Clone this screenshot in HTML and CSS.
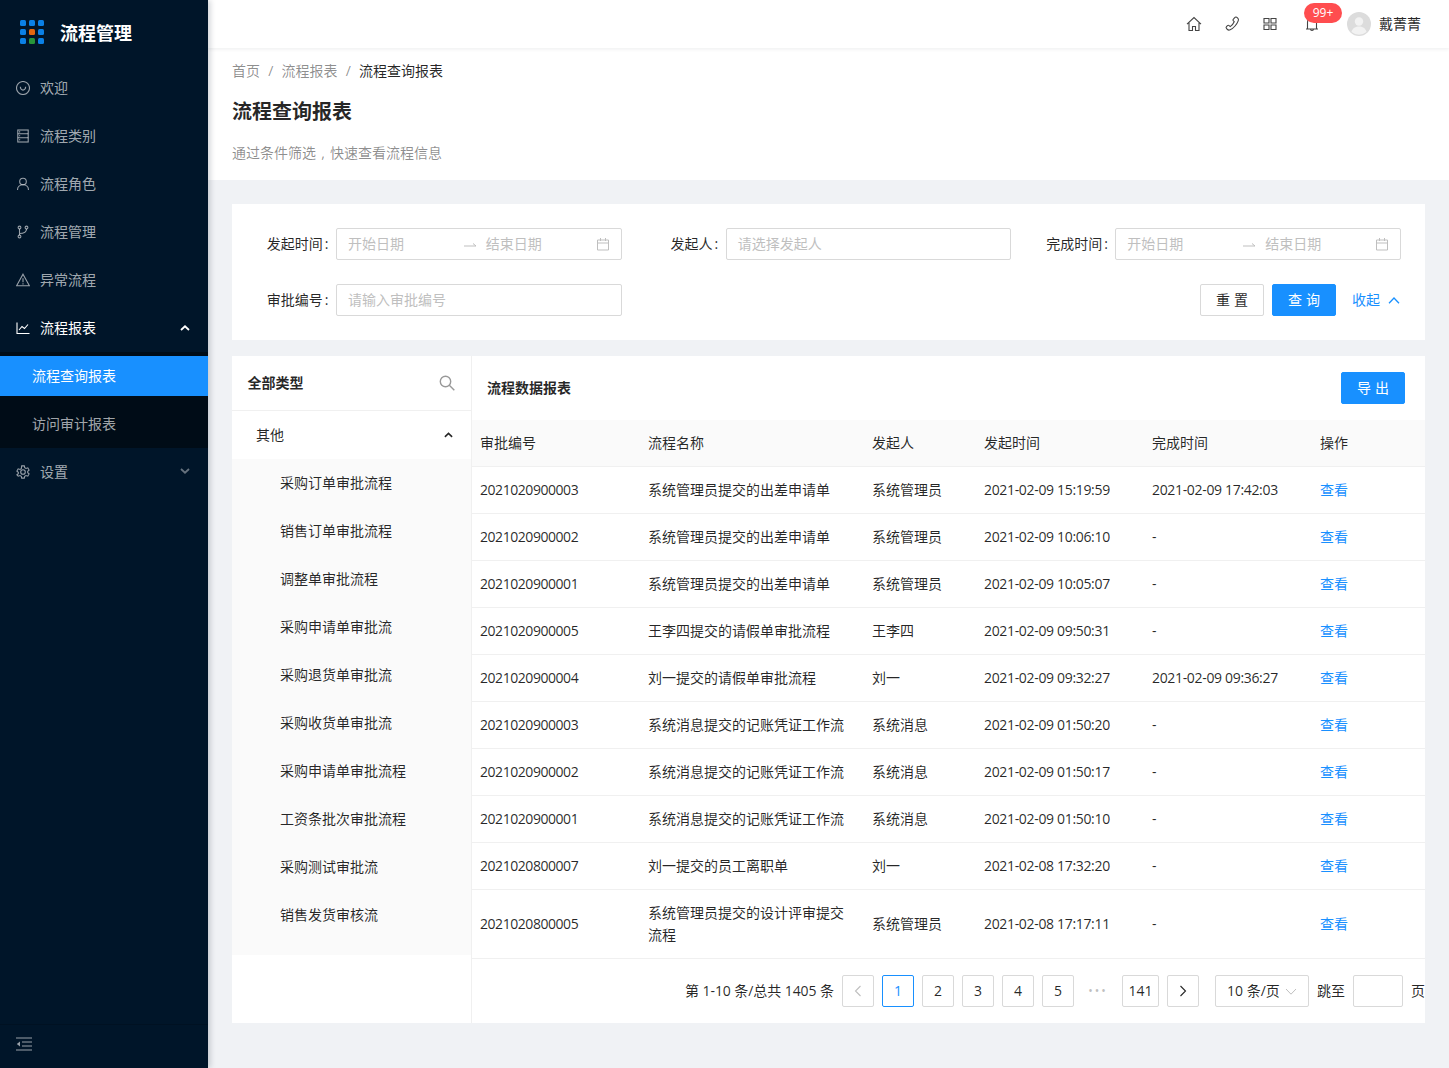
FILE: index.html
```html
<!DOCTYPE html>
<html lang="zh-CN">
<head>
<meta charset="utf-8">
<title>流程查询报表</title>
<link rel="stylesheet" href="styles.css">
</head>
<body>
<div class="app">
  <aside class="sider">
    <div class="logo">
      <div class="logo-dots">
        <i></i><i></i><i></i><i></i><i class="orange"></i><i></i><i></i><i class="green"></i><i></i>
      </div>
      <span class="logo-text">流程管理</span>
    </div>
    <nav class="menu">
      <a class="menu-item"><svg class="ic" viewBox="0 0 14 14"><circle cx="7" cy="7" r="6.500"/><path d="M4.300 5.800c.2 2.200 1.200 3.300 2.700 3.300s2.500-1.100 2.700-3.300"/></svg><span>欢迎</span></a>
      <a class="menu-item"><svg class="ic" viewBox="0 0 14 14"><rect x="1.800" y="1" width="10.400" height="12"/><path d="M1.800 4.800h10.400M1.800 8.800h10.400M3 2.900h1.200M3 6.800h1.200M3 10.800h1.200"/></svg><span>流程类别</span></a>
      <a class="menu-item"><svg class="ic" viewBox="0 0 14 14"><circle cx="7" cy="4.500" r="3.300"/><path d="M1.500 13c0-3.200 2.400-5.200 5.500-5.200s5.500 2 5.500 5.200"/></svg><span>流程角色</span></a>
      <a class="menu-item"><svg class="ic" viewBox="0 0 14 14"><circle cx="3.500" cy="2.500" r="1.400"/><circle cx="3.500" cy="11.500" r="1.400"/><circle cx="10.500" cy="2.500" r="1.400"/><path d="M3.500 4v6M3.500 8.500c4 0 7-1 7-4.600"/></svg><span>流程管理</span></a>
      <a class="menu-item"><svg class="ic" viewBox="0 0 14 14"><path d="M7 1.200 13.400 12.800H.6Z"/><path d="M7 5.200v4M7 10.200v1.200"/></svg><span>异常流程</span></a>
      <a class="menu-item open"><svg class="ic" viewBox="0 0 14 14"><path d="M1 1.500V12.500H13.500M3 9l3-3.500 2.500 2L12 3.500"/></svg><span>流程报表</span><svg class="arrow" viewBox="0 0 10 6"><path d="M1 5 5 1.300 9 5"/></svg></a>
      <div class="submenu">
        <a class="sub-item active">流程查询报表</a>
        <a class="sub-item">访问审计报表</a>
      </div>
      <a class="menu-item"><svg class="ic" viewBox="0 0 14 14"><path d="M5.700.9h2.600l.4 1.800 1.300.7 1.800-.6 1.300 2.300-1.400 1.200v1.400l1.400 1.200-1.300 2.300-1.800-.6-1.300.7-.4 1.800H5.700l-.4-1.800-1.300-.7-1.800.6L.9 9.900l1.400-1.200V7.300L.9 6.100l1.300-2.300 1.800.6 1.300-.7Z"/><circle cx="7" cy="7" r="2.300"/></svg><span>设置</span><svg class="arrow dim" viewBox="0 0 10 6"><path d="M1 1 5 4.700 9 1"/></svg></a>
    </nav>
    <div class="sider-foot">
      <svg class="fold" viewBox="0 0 16 14"><path d="M0 1h16M6 5h10M6 9h10M0 13h16"/><path class="solid" d="M4 4.500v5L.8 7Z"/></svg>
    </div>
  </aside>

  <div class="main">
    <header class="topbar">
      <svg class="top-ic" viewBox="0 0 16 16"><path d="M1 8.200 8 1.500l7 6.700M3 6.800V14.500h3.500v-4h3v4H13V6.800"/></svg>
      <svg class="top-ic" viewBox="0 0 16 16"><path d="M10.500 1.800c1-1 2-.9 2.700-.2l.9.900c.6.700.5 1.300.1 2.400-1 2.900-4.800 7.700-8 8.900-1 .4-2 .4-2.700-.3l-.9-.9c-.7-.7-.6-1.400-.1-1.900l1-1c.5-.5 1.200-.5 1.700 0l1 .9c1.500-1 3.200-3 4-4.900l-.8-.9c-.5-.5-.5-1.200 0-1.700Z"/></svg>
      <svg class="top-ic" viewBox="0 0 16 16"><path d="M2 2.500h5v4.500H2ZM9 2.500h5v4.500H9ZM2 9h5v4.500H2ZM9 9h5v4.500H9Z"/></svg>
      <div class="bell">
        <svg class="top-ic" viewBox="0 0 16 16"><path d="M3.500 13V6.500C3.500 3.800 5.500 2 8 2s4.500 1.800 4.500 4.500V13M2 13h12M6.500 13c0 2 3 2 3 0"/></svg>
        <span class="badge">99+</span>
      </div>
      <div class="user">
        <svg class="avatar" viewBox="0 0 24 24"><circle cx="12" cy="12" r="12" fill="#dcdcdc"/><circle cx="12" cy="9.500" r="4.200" fill="#f2f2f2"/><path d="M4.500 20c1-4 4-5.500 7.500-5.500s6.500 1.500 7.500 5.500a12 12 0 0 1-15 0Z" fill="#f2f2f2"/></svg>
        <span>戴菁菁</span>
      </div>
    </header>

    <section class="page-head">
      <div class="crumbs"><span>首页</span><em>/</em><span>流程报表</span><em>/</em><b>流程查询报表</b></div>
      <h1>流程查询报表</h1>
      <p>通过条件筛选<span class="comma">,</span>快速查看流程信息</p>
    </section>

    <div class="content">
      <form class="filter">
        <div class="field"><label>发起时间<i>:</i></label>
          <div class="input range"><span>开始日期</span><svg class="swap" viewBox="0 0 14 6"><path d="M1 4h12L10 1.500"/></svg><span>结束日期</span><svg class="cal" viewBox="0 0 14 14"><path d="M1.500 3h11v10h-11ZM1.500 6h11M4.500 1v3M9.500 1v3"/></svg></div>
        </div>
        <div class="field"><label>发起人<i>:</i></label>
          <div class="input"><span>请选择发起人</span></div>
        </div>
        <div class="field"><label>完成时间<i>:</i></label>
          <div class="input range"><span>开始日期</span><svg class="swap" viewBox="0 0 14 6"><path d="M1 4h12L10 1.500"/></svg><span>结束日期</span><svg class="cal" viewBox="0 0 14 14"><path d="M1.500 3h11v10h-11ZM1.500 6h11M4.500 1v3M9.500 1v3"/></svg></div>
        </div>
        <div class="field"><label>审批编号<i>:</i></label>
          <div class="input"><span>请输入审批编号</span></div>
        </div>
        <div class="actions">
          <button type="button" class="btn"><span class="sp">重置</span></button>
          <button type="button" class="btn primary"><span class="sp">查询</span></button>
          <a class="collapse">收起<svg viewBox="0 0 12 7"><path d="M1 6.200 6 1l5 5.200"/></svg></a>
        </div>
      </form>

      <section class="panel">
        <aside class="types">
          <div class="types-head"><b>全部类型</b><svg viewBox="0 0 16 16"><circle cx="6.500" cy="6.500" r="5.200"/><path d="m10.300 10.300 5 5"/></svg></div>
          <div class="types-group"><span>其他</span><svg viewBox="0 0 10 6"><path d="M1 5 5 1.300 9 5"/></svg></div>
          <ul class="types-list">
            <li>采购订单审批流程</li>
            <li>销售订单审批流程</li>
            <li>调整单审批流程</li>
            <li>采购申请单审批流</li>
            <li>采购退货单审批流</li>
            <li>采购收货单审批流</li>
            <li>采购申请单审批流程</li>
            <li>工资条批次审批流程</li>
            <li>采购测试审批流</li>
            <li>销售发货审核流</li>
          </ul>
        </aside>
        <div class="report">
          <div class="report-head"><b>流程数据报表</b><button type="button" class="btn primary"><span class="sp">导出</span></button></div>
          <table>
            <colgroup><col class="c1"><col class="c2"><col class="c3"><col class="c4"><col class="c5"><col class="c6"></colgroup>
            <thead><tr><th>审批编号</th><th>流程名称</th><th>发起人</th><th>发起时间</th><th>完成时间</th><th>操作</th></tr></thead>
            <tbody>
              <tr><td>2021020900003</td><td>系统管理员提交的出差申请单</td><td>系统管理员</td><td>2021-02-09 15:19:59</td><td>2021-02-09 17:42:03</td><td><a>查看</a></td></tr>
              <tr><td>2021020900002</td><td>系统管理员提交的出差申请单</td><td>系统管理员</td><td>2021-02-09 10:06:10</td><td>-</td><td><a>查看</a></td></tr>
              <tr><td>2021020900001</td><td>系统管理员提交的出差申请单</td><td>系统管理员</td><td>2021-02-09 10:05:07</td><td>-</td><td><a>查看</a></td></tr>
              <tr><td>2021020900005</td><td>王李四提交的请假单审批流程</td><td>王李四</td><td>2021-02-09 09:50:31</td><td>-</td><td><a>查看</a></td></tr>
              <tr><td>2021020900004</td><td>刘一提交的请假单审批流程</td><td>刘一</td><td>2021-02-09 09:32:27</td><td>2021-02-09 09:36:27</td><td><a>查看</a></td></tr>
              <tr><td>2021020900003</td><td>系统消息提交的记账凭证工作流</td><td>系统消息</td><td>2021-02-09 01:50:20</td><td>-</td><td><a>查看</a></td></tr>
              <tr><td>2021020900002</td><td>系统消息提交的记账凭证工作流</td><td>系统消息</td><td>2021-02-09 01:50:17</td><td>-</td><td><a>查看</a></td></tr>
              <tr><td>2021020900001</td><td>系统消息提交的记账凭证工作流</td><td>系统消息</td><td>2021-02-09 01:50:10</td><td>-</td><td><a>查看</a></td></tr>
              <tr><td>2021020800007</td><td>刘一提交的员工离职单</td><td>刘一</td><td>2021-02-08 17:32:20</td><td>-</td><td><a>查看</a></td></tr>
              <tr><td>2021020800005</td><td>系统管理员提交的设计评审提交流程</td><td>系统管理员</td><td>2021-02-08 17:17:11</td><td>-</td><td><a>查看</a></td></tr>
            </tbody>
          </table>
          <div class="pager">
            <span class="total">第 1-10 条/总共 1405 条</span>
            <a class="pg disabled"><svg viewBox="0 0 8 12"><path d="M6.500 1 1.500 6l5 5"/></svg></a>
            <a class="pg current">1</a>
            <a class="pg">2</a>
            <a class="pg">3</a>
            <a class="pg">4</a>
            <a class="pg">5</a>
            <span class="dots">•••</span>
            <a class="pg">141</a>
            <a class="pg"><svg viewBox="0 0 8 12"><path d="M1.500 1l5 5-5 5"/></svg></a>
            <div class="size"><span>10 条/页</span><svg viewBox="0 0 12 7"><path d="M1 1l5 5.200L11 1"/></svg></div>
            <span class="jump">跳至</span>
            <span class="jump-input"></span>
            <span class="jump-end">页</span>
          </div>
        </div>
      </section>
    </div>
  </div>
</div>
</body>
</html>
```

FILE: styles.css
```css
* { box-sizing: border-box; }
html, body { margin: 0; height: 100%; }
body {
  font-family: "Open Sans", "Noto Sans CJK SC", sans-serif;
  font-size: 14px;
  line-height: 22px;
  color: rgba(0, 0, 0, .85);
  background: #f0f2f5;
  overflow: hidden;
}
.app { display: flex; width: 1449px; height: 1068px; overflow: hidden; }

/* sidebar */
.sider {
  flex: 0 0 208px;
  display: flex;
  flex-direction: column;
  background: #001529;
  color: rgba(255, 255, 255, .65);
  box-shadow: 2px 0 6px rgba(0, 21, 41, .2);
  z-index: 3;
}
.logo { display: flex; align-items: center; height: 64px; padding-left: 20px; gap: 16px; }
.logo-dots { display: grid; grid-template-columns: repeat(3, 6px); gap: 3px; }
.logo-dots i { width: 6px; height: 6px; border-radius: 1.500px; background: #0a80e6; }
.logo-dots .orange { background: #e2660f; }
.logo-dots .green { background: #27953a; }
.logo-text { font-size: 18px; font-weight: 700; color: #fff; padding-top: 2px; }
.menu { flex: 1; }
.menu-item {
  display: flex;
  align-items: center;
  height: 48px;
  padding: 0 18px 0 16px;
}
.menu-item span { margin-left: 10px; flex: 1; }
.ic { width: 14px; height: 14px; fill: none; stroke: rgba(255, 255, 255, .6); stroke-width: 1.100; }
.arrow { width: 10px; height: 6px; fill: none; stroke: rgba(255, 255, 255, .4); stroke-width: 1.800; }
.arrow.dim { margin-top: -2px; }
.menu-item.open { color: #fff; }
.menu-item.open .ic { stroke: #fff; }
.menu-item.open .arrow { stroke: #fff; }
.submenu { background: #000c17; padding: 4px 0; }
.sub-item { display: block; height: 40px; line-height: 40px; padding-left: 32px; }
.sub-item + .sub-item { margin-top: 8px; }
.sub-item.active { background: #1890ff; color: #fff; }
.sider-foot {
  display: flex;
  align-items: center;
  height: 44px;
  padding: 0 0 5px 16px;
  border-top: 1px solid #001122;
}
.fold { width: 16px; height: 14px; fill: none; stroke: rgba(255, 255, 255, .6); stroke-width: 1; }
.fold .solid { fill: rgba(255, 255, 255, .6); stroke: none; }

/* main */
.main { flex: 1; min-width: 0; display: flex; flex-direction: column; }
.topbar {
  display: flex;
  align-items: center;
  justify-content: flex-end;
  flex: 0 0 48px;
  padding-right: 28px;
  background: #fff;
  box-shadow: 0 1px 4px rgba(0, 21, 41, .08);
  z-index: 2;
}
.top-ic { width: 16px; height: 16px; fill: none; stroke: #444; stroke-width: 1.100; display: block; }
.topbar > .top-ic { margin-right: 22px; }
.bell { position: relative; margin-left: 4px; }
.badge {
  position: absolute;
  left: 0;
  top: -13px;
  width: 38px;
  height: 20px;
  border-radius: 10px;
  background: #ff4d4f;
  color: #fff;
  font-size: 12px;
  line-height: 20px;
  text-align: center;
}
.user { display: flex; align-items: center; margin-left: 27px; gap: 8px; }
.avatar { width: 24px; height: 24px; display: block; }

.page-head { background: #fff; padding: 12px 24px 16px; }
.crumbs { display: flex; color: rgba(0, 0, 0, .45); height: 22px; }
.crumbs em { font-style: normal; width: 5.500px; margin: 0 8px; text-align: center; }
.crumbs b { font-weight: 400; color: rgba(0, 0, 0, .85); }
.page-head h1 { margin: 16px 0 0; font-size: 20px; line-height: 28px; font-weight: 600; }
.page-head p { margin: 16px 0 0; color: rgba(0, 0, 0, .45); }
.comma { display: inline-block; width: 14px; text-align: center; }

.content { padding: 24px 24px 0; display: flex; flex-direction: column; gap: 16px; }

/* filter */
.filter {
  display: grid;
  grid-template-columns: repeat(3, 1fr);
  gap: 24px;
  padding: 24px;
  background: #fff;
}
.field { display: flex; min-width: 0; }
.field label {
  flex: 0 0 80px;
  padding-right: 7.500px;
  line-height: 32px;
  text-align: right;
  white-space: nowrap;
}
.field label i { font-style: normal; margin-left: 2px; }
.input {
  flex: 1;
  min-width: 0;
  display: flex;
  align-items: center;
  height: 32px;
  padding: 0 11px;
  border: 1px solid #d9d9d9;
  border-radius: 2px;
  color: #bfbfbf;
}
.range span { flex: 1; }
.swap { width: 14px; height: 6px; margin: 2px 9px 0; fill: none; stroke: #bfbfbf; }
.cal { width: 14px; height: 14px; fill: none; stroke: #bfbfbf; margin-left: 4px; }
.actions { grid-column: span 2; display: flex; align-items: center; justify-content: flex-end; gap: 8px; }
.btn {
  width: 64px;
  height: 32px;
  padding: 0;
  border: 1px solid #d9d9d9;
  border-radius: 2px;
  background: #fff;
  color: rgba(0, 0, 0, .85);
  font: inherit;
}
.btn.primary { background: #1890ff; border-color: #1890ff; color: #fff; }
.sp { letter-spacing: 4px; margin-right: -4px; }
.collapse { display: flex; align-items: center; margin-left: 8px; padding-right: 1px; color: #1890ff; }
.collapse svg { width: 12px; height: 7px; margin-left: 8px; fill: none; stroke: #1890ff; stroke-width: 1.300; }

/* panel */
.panel { display: flex; height: 667px; background: #fff; }
.types { flex: 0 0 240px; border-right: 1px solid #f0f0f0; }
.types-head {
  display: flex;
  align-items: center;
  justify-content: space-between;
  height: 55px;
  padding: 0 16px 0 15.500px;
  border-bottom: 1px solid #f0f0f0;
}
.types-head b { font-weight: 600; }
.types-head svg { width: 16px; height: 16px; fill: none; stroke: #999; stroke-width: 1.400; }
.types-group { display: flex; align-items: center; justify-content: space-between; height: 48px; padding: 0 18px 0 24px; }
.types-group svg { width: 9px; height: 6px; fill: none; stroke: rgba(0, 0, 0, .85); stroke-width: 1.800; }
.types-list { list-style: none; margin: 0; padding: 0 0 16px; background: #fafafa; }
.types-list li { height: 48px; line-height: 48px; padding-left: 48px; }

.report { flex: 1; min-width: 0; }
.report-head { display: flex; align-items: center; justify-content: space-between; height: 64px; padding: 0 20px 0 15px; }
.report-head b { font-weight: 600; }
table { width: 100%; table-layout: fixed; border-collapse: separate; border-spacing: 0; }
.c1 { width: 168px; } .c2 { width: 224px; } .c3 { width: 112px; } .c4 { width: 168px; } .c5 { width: 168px; }
th, td { padding: 12px 8px; border-bottom: 1px solid #f0f0f0; text-align: left; font-weight: 400; }
th { background: #fafafa; }
td:nth-child(1) { letter-spacing: -.45px; }
td:nth-child(4), td:nth-child(5) { letter-spacing: -.33px; }
td a { color: #1890ff; }

.pager { display: flex; align-items: center; justify-content: flex-end; height: 64px; white-space: nowrap; }
.total { margin-right: 8px; letter-spacing: -.07px; }
.pg {
  display: flex;
  align-items: center;
  justify-content: center;
  min-width: 32px;
  height: 32px;
  padding: 0 5.500px;
  margin-right: 8px;
  border: 1px solid #d9d9d9;
  border-radius: 2px;
}
.pg svg { width: 8px; height: 12px; fill: none; stroke: rgba(0, 0, 0, .85); stroke-width: 1.100; }
.pg.disabled svg { stroke: #bfbfbf; }
.pg.current { border-color: #1890ff; color: #1890ff; }
.dots { width: 32px; margin-right: 8px; text-align: center; color: #bfbfbf; font-size: 12px; letter-spacing: 2px; }
.size {
  display: flex;
  align-items: center;
  justify-content: space-between;
  width: 94px;
  height: 32px;
  margin-left: 8px;
  padding: 0 11px;
  border: 1px solid #d9d9d9;
  border-radius: 2px;
}
.size svg { width: 12px; height: 7px; fill: none; stroke: #bfbfbf; }
.jump { margin-left: 8px; }
.jump-input { width: 50px; height: 32px; margin: 0 8px; border: 1px solid #d9d9d9; border-radius: 2px; }
```
